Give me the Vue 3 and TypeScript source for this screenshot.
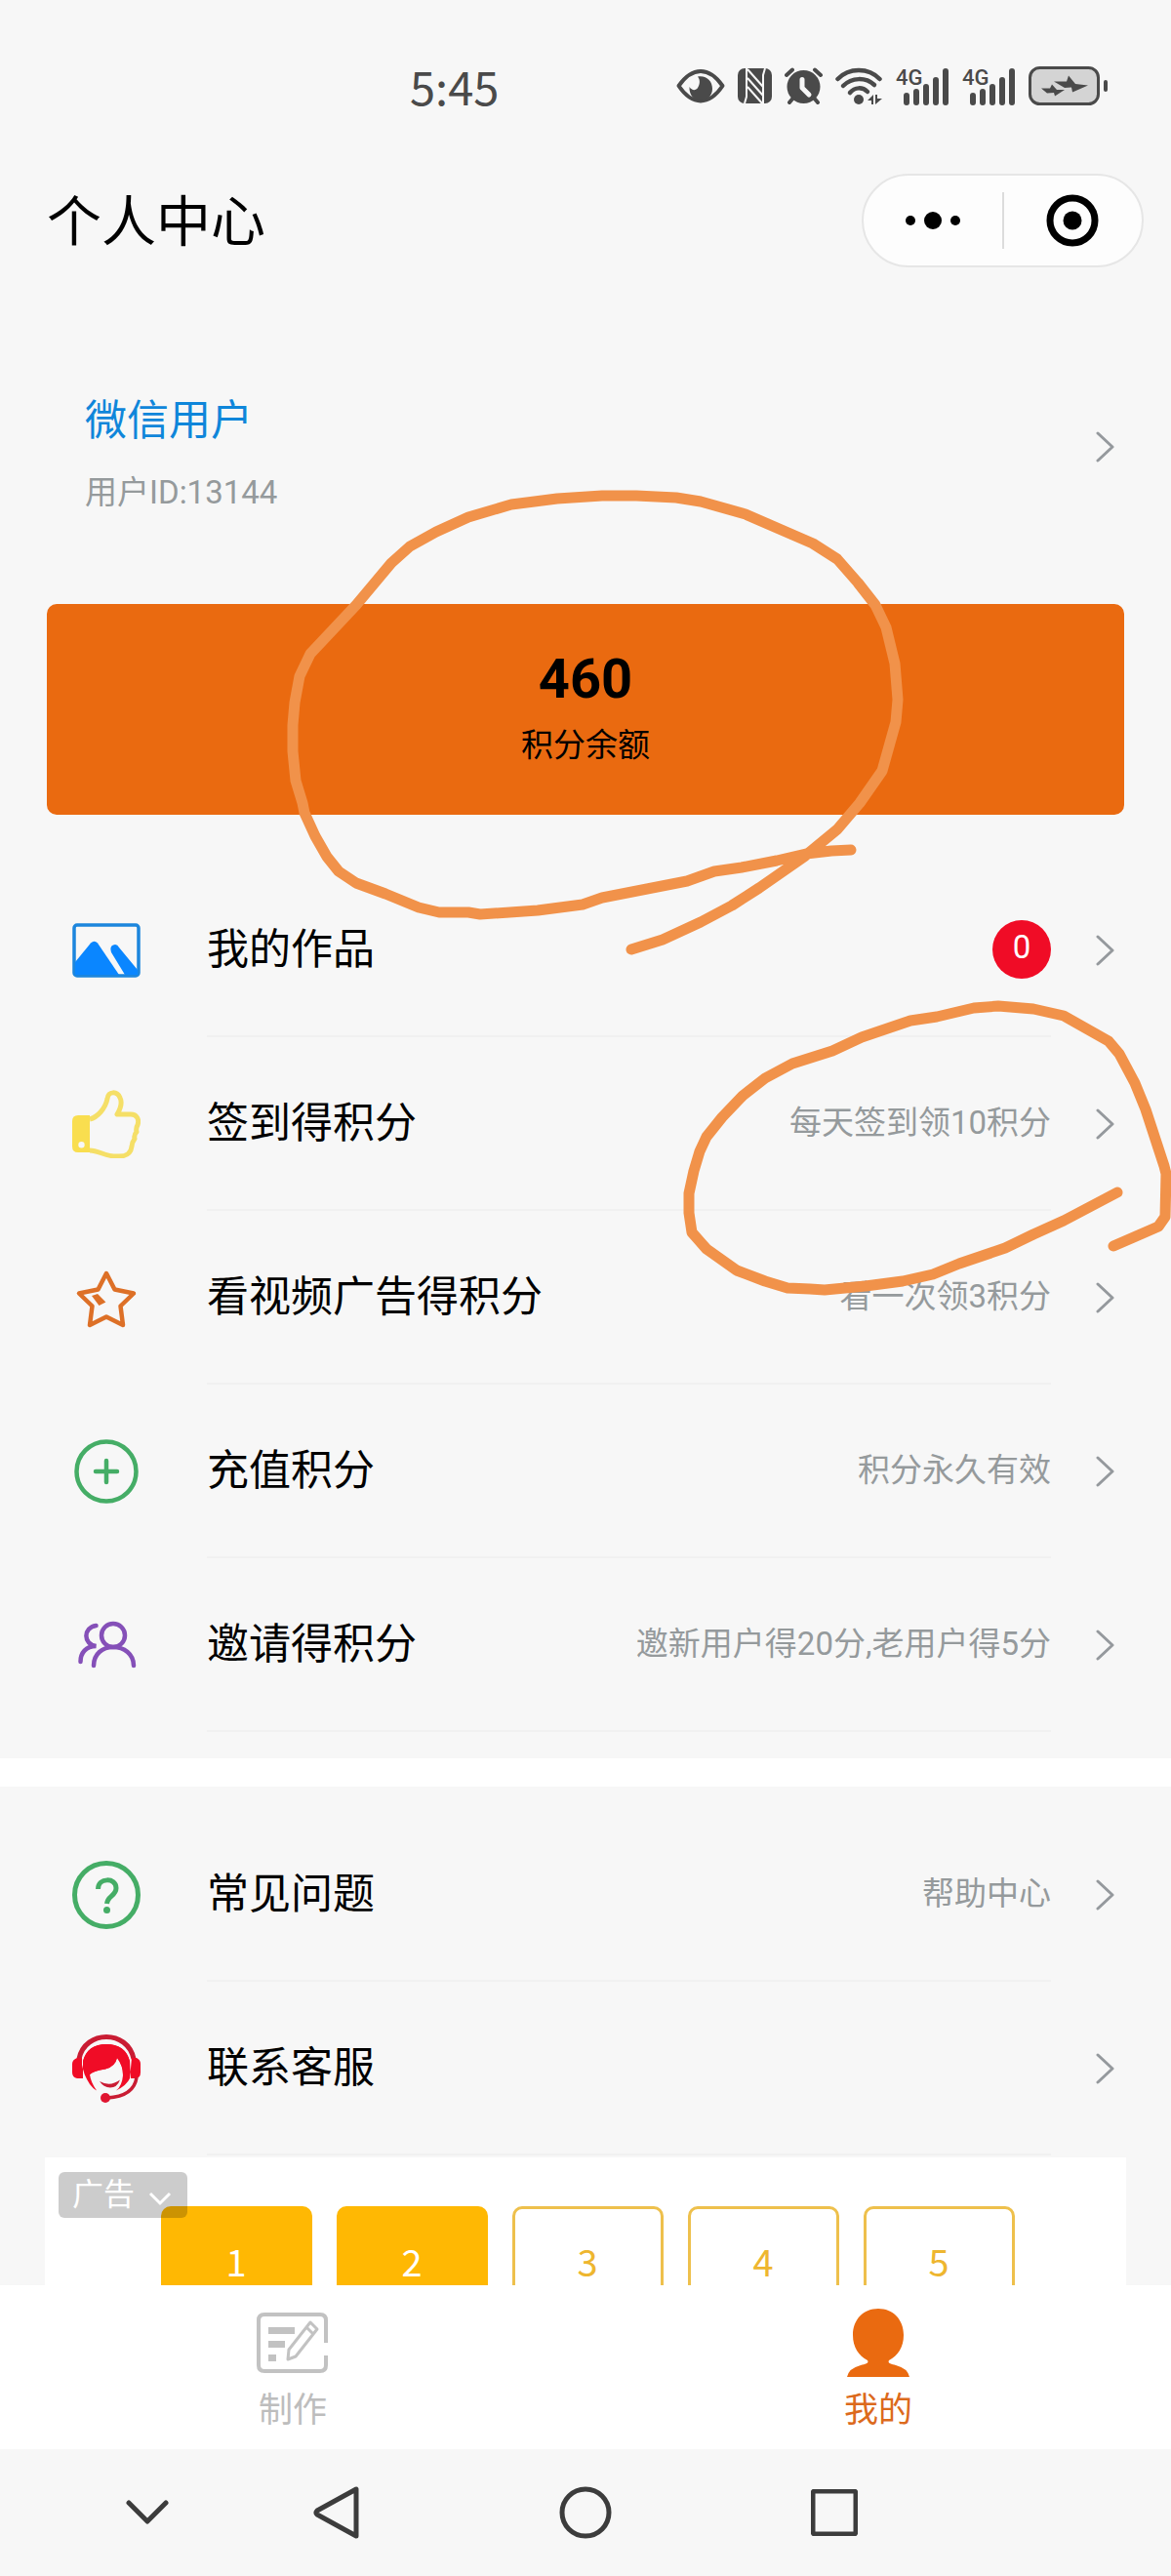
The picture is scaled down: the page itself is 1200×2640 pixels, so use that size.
<script setup lang="ts">
interface MenuItem {
  icon: string
  label: string
  note?: string
  badge?: number
}

const pointItems: MenuItem[] = [
  { icon: 'works', label: '我的作品', badge: 0 },
  { icon: 'thumb', label: '签到得积分', note: '每天签到领10积分' },
  { icon: 'star', label: '看视频广告得积分', note: '看一次领3积分' },
  { icon: 'plus', label: '充值积分', note: '积分永久有效' },
  { icon: 'people', label: '邀请得积分', note: '邀新用户得20分,老用户得5分' },
]

const helpItems: MenuItem[] = [
  { icon: 'question', label: '常见问题', note: '帮助中心' },
  { icon: 'service', label: '联系客服' },
]

const groups = [
  { name: 'points', items: pointItems },
  { name: 'help', items: helpItems },
]

const steps = [1, 2, 3, 4, 5]
const doneSteps = 2
</script>

<template>
  <div class="page">
    <div class="status">
      <time class="clock">5:45</time>
      <div class="status-icons">
        <svg width="50" height="42" viewBox="0 0 50 42">
          <path d="M2.500 21Q13 6 25 6T47.500 21Q37 36.500 25 36.500T2.500 21Z" fill="none" stroke="#4a4a4a" stroke-width="4" stroke-linejoin="round" />
          <path d="M22 11.500C31 10 37 16 37 24C37 31 32 36 25 36C18 36 13 30 13.500 22C16 26 20 26 22 23C24 20 25 15 22 11.500Z" fill="#4a4a4a" />
        </svg>
        <svg width="35" height="42" viewBox="0 0 35 42">
          <rect y="3" width="35" height="36" rx="7" fill="#4a4a4a" />
          <path d="M9 3V32L7 39M26 39V10L28 3M10 4L26 22M10 13L26 31M10 22L26 40" fill="none" stroke="#f7f7f7" stroke-width="2" />
        </svg>
        <svg width="39" height="42" viewBox="0 0 39 42">
          <circle cx="19.500" cy="22" r="17" fill="#4a4a4a" />
          <path d="M2 10L8 4.500M37 10L31 4.500M5 38L10 32M34 38L29 32" stroke="#4a4a4a" stroke-width="4" stroke-linecap="round" />
          <path d="M18 14.500V23L25 30" fill="none" stroke="#f7f7f7" stroke-width="5" stroke-linecap="round" stroke-linejoin="round" />
        </svg>
        <svg width="49" height="42" viewBox="0 0 49 42">
          <g fill="none" stroke="#4a4a4a" stroke-width="4.500" stroke-linecap="round">
            <path d="M2.500 14C14 2 34 2 45.500 14" />
            <path d="M8 21C17 12 31 12 40 20" />
            <path d="M15 28C20 22 28 22 33 27" />
          </g>
          <circle cx="24" cy="35" r="5" fill="#4a4a4a" />
          <path d="M39 30V40H37V36H33ZM41 40V30H43V34H48Z" fill="#4a4a4a" />
        </svg>
        <svg v-for="n in 2" :key="n" width="55" height="42" viewBox="0 0 55 42">
          <text x="0" y="20" class="net">4G</text>
          <path d="M11 31V38M21 27V38M31 22V38M41 15V38M51 6V38" stroke="#4a4a4a" stroke-width="6" stroke-linecap="round" />
        </svg>
        <svg width="82" height="42" viewBox="0 0 82 42">
          <rect x="1.500" y="2.500" width="70" height="37" rx="10" fill="#d4d4d4" stroke="#4a4a4a" stroke-width="3" />
          <rect x="77" y="15" width="4" height="12" rx="2" fill="#4a4a4a" />
          <path d="M13 23.500H22L24 19.500L29 25H37L27 31.500L26 28L19 28.500ZM26 16.500H39L41 10.500L48 19L61 20.500L45 27.500L44 22.500L37 23Z" fill="#4a4a4a" />
        </svg>
      </div>
    </div>

    <header class="header">
      <h1>个人中心</h1>
      <div class="capsule">
        <button type="button" aria-label="更多">
          <svg width="56" height="20" viewBox="0 0 56 20">
            <circle cx="5" cy="10" r="5" /><circle cx="28" cy="10" r="9" /><circle cx="51" cy="10" r="5" />
          </svg>
        </button>
        <span class="split"></span>
        <button type="button" aria-label="关闭">
          <svg width="54" height="54" viewBox="0 0 54 54">
            <circle cx="27" cy="27" r="23" fill="none" stroke="#000" stroke-width="7" /><circle cx="27" cy="27" r="9.500" />
          </svg>
        </button>
      </div>
    </header>

    <a class="profile" href="#profile">
      <div class="who">
        <strong>微信用户</strong>
        <span>用户ID:13144</span>
      </div>
      <svg class="chevron" width="20" height="32" viewBox="0 0 20 32"><path d="M2 2L17 16L2 30" /></svg>
    </a>

    <section class="balance">
      <b>460</b>
      <span>积分余额</span>
      <svg class="mark mark-balance" width="640" height="490" viewBox="290 495 640 490">
        <path d="M872 871L852 872L826 875L796 882L760 889L732 893L704 903L617 920L597 927L551 933L492 937L480 935L450 935L429 930L395 916L365 905L347 893L335 878L323 857L312 833L310 823L303 800L300 770L300 743L302 720L307 693L318 670L365 620L401 577L420 560L447 545L480 530L524 517L571 511L617 508L652 508L693 510L718 514L764 527L833 557L858 573L879 597L897 620L908 643L917 680L920 717L918 740L904 790L881 823L858 850L824 878L778 910L750 928L718 945L679 963L647 973" />
      </svg>
    </section>

    <nav v-for="group in groups" :key="group.name" class="group" :class="group.name">
      <ul>
        <li v-for="item in group.items" :key="item.label">
          <a class="row" :href="'#' + item.icon">
            <svg class="icon" width="70" height="70" viewBox="0 0 70 70">
              <g v-if="item.icon === 'works'">
                <rect x="2" y="9" width="66" height="52" rx="3" fill="none" stroke="#1c86dd" stroke-width="3.500" />
                <path d="M3 47L19 27.500Q22.600 24 26 27.500L48 60H3Z" fill="#0a86ff" />
                <path d="M40 37Q38 31 42 29.500Q46 28 48 32L67 55V60H54Z" fill="#0a86ff" />
              </g>
              <g v-else-if="item.icon === 'thumb'">
                <path fill-rule="evenodd" d="M6 26H18V64H6Q0 64 0 58V32Q0 26 6 26ZM9.500 53A3.200 3.200 0 1 0 9.500 59.400A3.200 3.200 0 1 0 9.500 53Z" fill="#f9de4f" />
                <path d="M18 30C26 28 34 19 36 9C37 1 46 1 49 8C52 14 49 20 46 25H60C66 25 69 30 67 36Q65 39 66 43Q63 46 64 50Q61 54 61 58C60 65 56 68 48 68C34 69 28 62 18 62" fill="none" stroke="#f5df67" stroke-width="5" stroke-linejoin="round" />
              </g>
              <g v-else-if="item.icon === 'star'">
                <path d="M35 10L43.500 26.500L63 30.500L49.500 43.500L52 63L35 54.500L18 63L20.500 43.500L7 30.500L26.500 26.500Z" fill="none" stroke="#dd7027" stroke-width="4.500" stroke-linejoin="round" />
                <path d="M20 33L26 31L34.400 39.500L27.500 43Z" fill="#dd7027" />
              </g>
              <g v-else-if="item.icon === 'plus'" fill="none" stroke="#45ad66" stroke-width="4.500" stroke-linecap="round">
                <circle cx="35" cy="35" r="30.500" />
                <path d="M35 24V46M24 35H46" />
              </g>
              <g v-else-if="item.icon === 'people'" fill="none" stroke="#8550b8" stroke-width="4.500" stroke-linecap="round">
                <circle cx="42" cy="25" r="12" />
                <path d="M22 56C22 44 31 37 42 37S63 44 63 56" />
                <path d="M24.500 15C11 17 11 34 24.500 36C14 36 8.500 43 8.500 52" />
              </g>
              <g v-else-if="item.icon === 'question'">
                <circle cx="35" cy="35" r="32.500" fill="none" stroke="#45ad66" stroke-width="5" />
                <path d="M26.500 29C26.500 17 45 17 45 28C45 36 36 36 35.500 44" fill="none" stroke="#45ad66" stroke-width="5" />
                <circle cx="35.500" cy="50.500" r="3.500" fill="#45ad66" />
              </g>
              <g v-else>
                <path d="M7 25C13 -5 57 -5 63 25" fill="none" stroke="#c91c33" stroke-width="5" />
                <path d="M5 24H10V31Q12 42 18 51Q22 56 25 57.500Q19 49 18 41Q22 37 34 35.500Q44 33 46 24Q52 32 52 42Q51 53 45 57.500Q56 52 59 45L61 24H66Q70 26 70 30V39Q70 45 64 45H60L59 27Q54 10 35 10T11 27V45H5Q0 44 0 39V30Q0 26 5 24Z" fill="#f00c26" />
                <path d="M11 28Q15 10 35 10T59 28L58 44L52 40Q52 32 46 24Q44 33 34 35.500Q22 37 18 41L13 42Z" fill="#f00c26" />
                <path d="M28 48Q39 54 49 46.500Q46 54.500 39 54.500Q32 54 28 48Z" fill="#c91c33" />
                <path d="M66 44C64 58 53 64 36 65" fill="none" stroke="#c91c33" stroke-width="3.500" />
                <circle cx="34" cy="65" r="5" fill="#e01530" />
              </g>
            </svg>
            <span class="body">
              <span class="label">{{ item.label }}</span>
              <span v-if="item.badge !== undefined" class="badge">{{ item.badge }}</span>
              <span v-else-if="item.note" class="note">{{ item.note }}</span>
            </span>
            <svg class="chevron" width="20" height="32" viewBox="0 0 20 32"><path d="M2 2L17 16L2 30" /></svg>
          </a>
        </li>
      </ul>
      <svg v-if="group.name === 'points'" class="mark mark-signin" width="510" height="310" viewBox="690 1020 510 310">
        <path d="M1145 1222L1090 1251L1059 1265L1030 1279L983 1295L956 1306L925 1313L887 1318L845 1322L830 1321L807 1320L784 1313L755 1302L724 1280L709 1263L706 1243L706 1223L711 1200L717 1180L724 1165L740 1145L761 1123L784 1105L812 1090L853 1077L883 1063L933 1046L960 1042L998 1033L1023 1031L1059 1034L1090 1041L1136 1067L1147 1080L1163 1110L1174 1137L1193 1195L1195 1203L1194 1247L1187 1257L1141 1277" />
      </svg>
    </nav>

    <section class="ad">
      <ol class="steps">
        <li v-for="n in steps" :key="n" :class="{ done: n <= doneSteps }">{{ n }}</li>
      </ol>
      <button class="ad-tag" type="button">
        广告
        <svg width="24" height="16" viewBox="0 0 24 16"><path d="M2 3L12 13L22 3" fill="none" stroke="#fff" stroke-width="3" /></svg>
      </button>
    </section>

    <nav class="tabs">
      <a href="#make">
        <svg width="74" height="72" viewBox="0 -5 74 72" fill="none" stroke="#c2c2c2">
          <path d="M71 31V8Q71 2 65 2H8Q2 2 2 8V54Q2 60 8 60H65Q71 60 71 54V44" stroke-width="4" />
          <path d="M12 15H39V22H12ZM12 29H29V36H12ZM12 43H20V50H12Z" fill="#c2c2c2" stroke="none" />
          <path d="M55 10L62 17L40 45L32 48L33 38ZM51 15L58 22" stroke-width="3" stroke-linejoin="round" />
        </svg>
        <span>制作</span>
      </a>
      <a class="active" href="#mine">
        <svg width="64" height="72" viewBox="0 0 64 72">
          <path d="M32 1C47 1 58 12 58 28C58 41 52 49 43 54C41 57 46 58 50 59Q62 62 64 71H0Q2 62 14 59C18 58 23 57 21 54C12 49 6 41 6 28C6 12 17 1 32 1Z" fill="#ea6a10" />
        </svg>
        <span>我的</span>
      </a>
    </nav>

    <div class="system">
      <button type="button" aria-label="收起">
        <svg width="44" height="26" viewBox="0 0 44 26"><path d="M3 3L22 22L41 3" /></svg>
      </button>
      <button type="button" aria-label="返回">
        <svg width="48" height="54" viewBox="0 0 48 54"><path d="M44 3V51L4 29Q2 27 4 25Z" /></svg>
      </button>
      <button type="button" aria-label="主页">
        <svg width="54" height="54" viewBox="0 0 54 54"><circle cx="27" cy="27" r="24" /></svg>
      </button>
      <button type="button" aria-label="最近任务">
        <svg width="48" height="48" viewBox="0 0 48 48"><rect x="2" y="2" width="44" height="44" rx="2" /></svg>
      </button>
    </div>
  </div>
</template>

<style>
body {
  margin: 0;
  background: #f7f7f7;
}
</style>

<style scoped>
.page {
  min-height: 100vh;
  display: flex;
  flex-direction: column;
  overflow: hidden;
  background: #f7f7f7;
  color: #000;
  font-family: Roboto, "Noto Sans CJK SC", sans-serif;
}

a {
  color: inherit;
  text-decoration: none;
}

button {
  padding: 0;
  border: 0;
  background: none;
  font: inherit;
  color: inherit;
}

svg {
  display: block;
  flex: none;
}

ul,
ol {
  margin: 0;
  padding: 0;
  list-style: none;
}

.status {
  display: flex;
  align-items: center;
  justify-content: space-between;
  padding: 60px 64px 24px 420px;
  color: #4a4a4a;
}

.clock {
  font-family: "Noto Sans CJK SC", sans-serif;
  font-size: 47px;
  line-height: 56px;
}

.status-icons {
  display: flex;
  align-items: center;
  gap: 13px;
}

.net {
  font-size: 22px;
  font-weight: 500;
  fill: #4a4a4a;
}

.header {
  display: flex;
  align-items: center;
  justify-content: space-between;
  padding: 38px 28px 38px 48px;
}

h1 {
  margin: 0;
  padding-top: 4px;
  font-size: 56px;
  line-height: 72px;
  font-weight: 400;
}

.capsule {
  box-sizing: border-box;
  width: 289px;
  height: 96px;
  display: flex;
  align-items: center;
  border: 2px solid #e6e6e6;
  border-radius: 48px;
  background: #fdfdfd;
}

.capsule button {
  flex: 1;
  display: flex;
  justify-content: center;
}

.split {
  width: 2px;
  height: 58px;
  background: #dcdcdc;
}

.profile {
  display: flex;
  align-items: center;
  justify-content: space-between;
  padding: 89px 57px 90px 87px;
}

.who {
  display: flex;
  flex-direction: column;
  gap: 20px;
}

.who strong {
  font-size: 43px;
  line-height: 60px;
  font-weight: 400;
  color: #0f86da;
}

.who span {
  font-size: 33px;
  line-height: 48px;
  color: #959a9c;
}

.chevron {
  align-self: center;
  fill: none;
  stroke: #95999d;
  stroke-width: 3;
  stroke-linecap: round;
  stroke-linejoin: round;
}

.profile .chevron {
  margin-bottom: 14px;
}

.balance {
  position: relative;
  display: flex;
  flex-direction: column;
  align-items: center;
  gap: 14px;
  margin: 0 48px 50px;
  padding: 45px 0 49px;
  border-radius: 10px;
  background: #ea6a10;
}

.balance b {
  font-size: 56px;
  line-height: 64px;
}

.balance span {
  font-size: 33px;
  line-height: 44px;
}

.mark {
  position: absolute;
  z-index: 1;
  fill: none;
  stroke: #f1924a;
  stroke-width: 11;
  stroke-linecap: round;
  stroke-linejoin: round;
  pointer-events: none;
}

.mark-balance {
  top: -124px;
  left: calc(50% - 310px);
}

.mark-signin {
  top: 135px;
  right: 0;
}

.group {
  position: relative;
}

.points {
  padding-bottom: 27px;
  border-bottom: 29px solid #fff;
}

.help {
  padding: 22px 0 2px;
}

.row {
  height: 178px;
  display: flex;
  padding: 0 57px 0 74px;
}

.icon {
  align-self: center;
}

.body {
  flex: 1;
  display: flex;
  align-items: center;
  justify-content: space-between;
  margin: 0 46px 0 68px;
  border-bottom: 2px solid #f1f1f1;
}

.label {
  font-size: 43px;
  line-height: 60px;
}

.note {
  font-size: 33px;
  line-height: 48px;
  color: #959a9c;
}

.badge {
  width: 60px;
  height: 60px;
  border-radius: 50%;
  background: #f00c26;
  color: #fff;
  font-size: 33px;
  line-height: 56px;
  text-align: center;
}

.ad {
  position: relative;
  height: 131px;
  margin: 0 46px;
  overflow: hidden;
  background: #fff;
}

.steps {
  display: flex;
  justify-content: center;
  gap: 25px;
  padding: 50px 0 0 4px;
}

.steps li {
  box-sizing: border-box;
  width: 155px;
  height: 155px;
  padding-top: 33px;
  border: 3px solid #eec04c;
  border-radius: 10px;
  color: #eeb62f;
  font-family: "Noto Sans CJK SC", sans-serif;
  font-size: 38px;
  line-height: 40px;
  text-align: center;
}

.steps .done {
  border-color: #ffb803;
  background: #ffb803;
  color: #fff;
}

.ad-tag {
  position: absolute;
  top: 15px;
  left: 14px;
  height: 47px;
  display: flex;
  align-items: center;
  gap: 14px;
  padding: 0 16px 0 14px;
  border-radius: 6px;
  background: rgba(0, 0, 0, 0.2);
  color: #fff;
  font-size: 32px;
  line-height: 47px;
}

.ad-tag svg {
  margin-top: 6px;
}

.tabs {
  display: flex;
  background: #fff;
  color: #bdbdbd;
}

.tabs a {
  flex: 1;
  display: flex;
  flex-direction: column;
  align-items: center;
  gap: 10px;
  padding: 23px 0 15px;
  font-size: 35px;
  line-height: 48px;
}

.tabs .active {
  color: #dc6a1c;
}

.system {
  height: 130px;
  display: grid;
  grid-template-columns: 84fr 133fr 255fr 255fr 255fr 218fr;
  align-items: center;
}

.system button {
  display: flex;
  justify-content: center;
}

.system button:first-child {
  grid-column: 2;
}

.system svg {
  fill: none;
  stroke: #3c3c3c;
  stroke-width: 5;
  stroke-linecap: round;
  stroke-linejoin: round;
}
</style>
